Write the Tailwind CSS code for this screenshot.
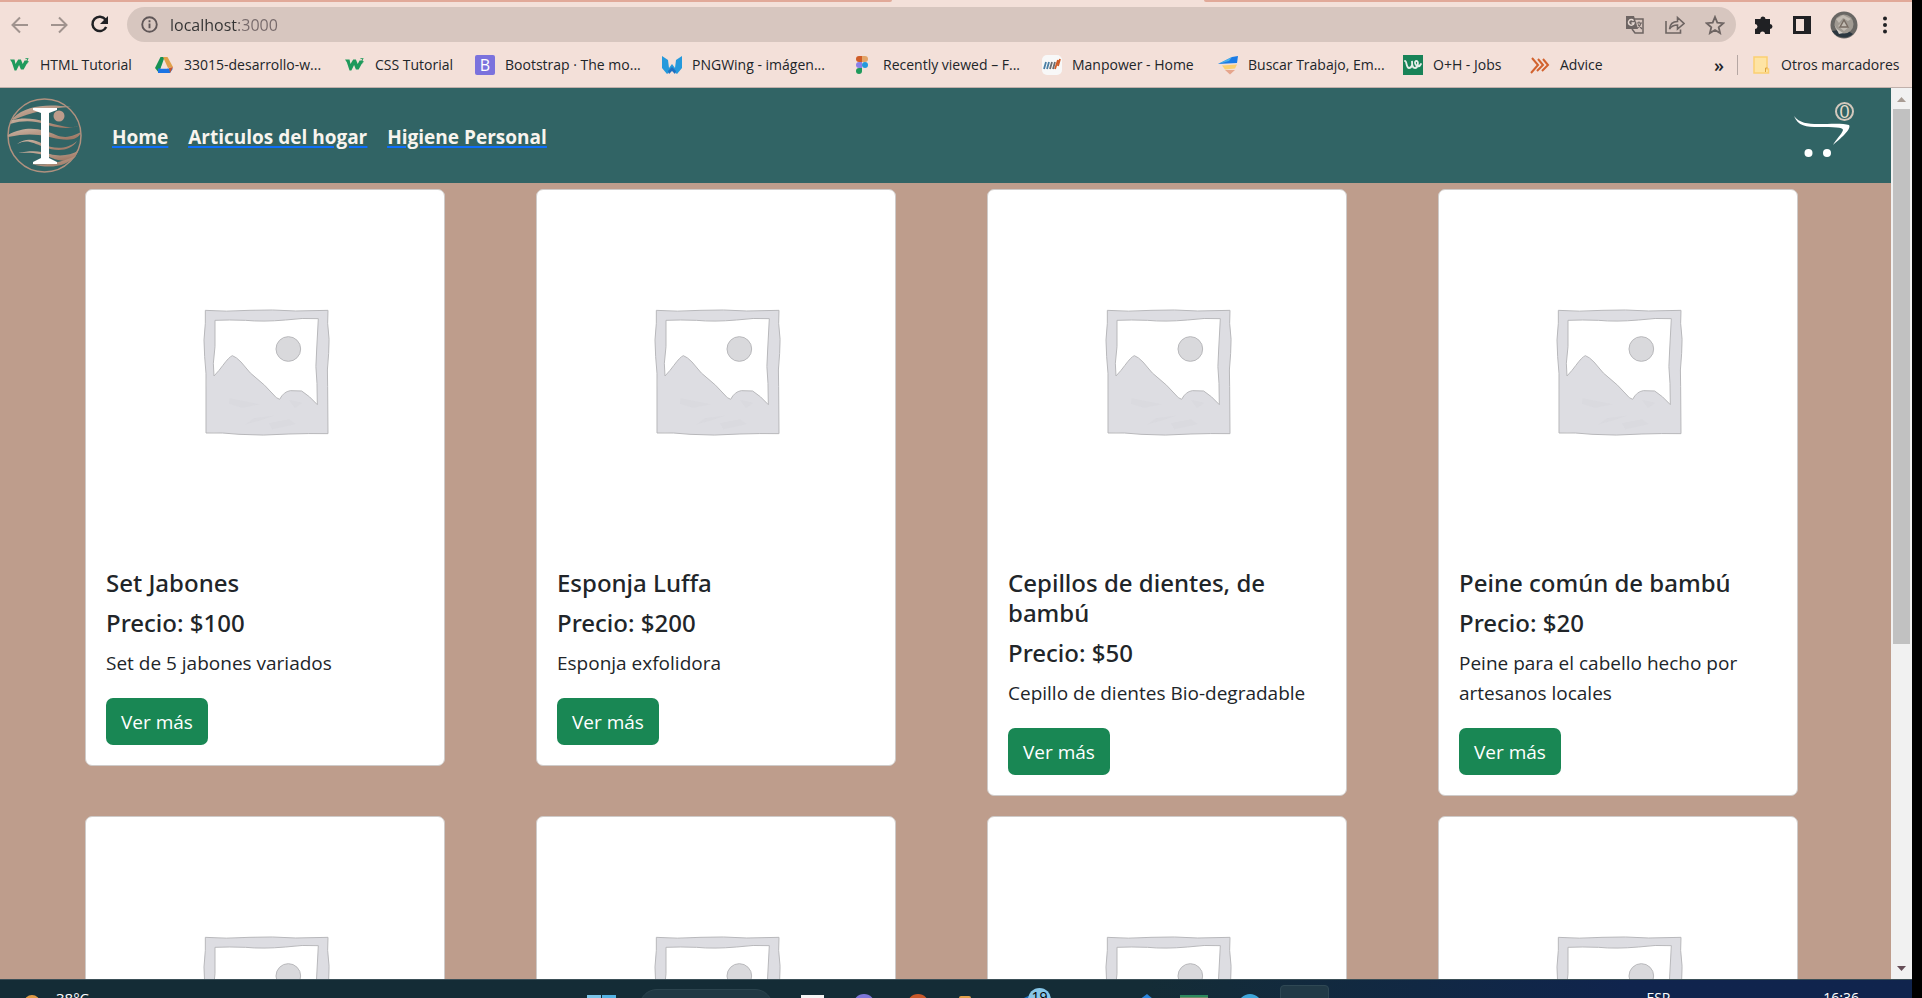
<!DOCTYPE html>
<html lang="es">
<head>
<meta charset="utf-8">
<meta name="viewport" content="width=device-width, initial-scale=1">
<title>Tienda</title>
<script src="https://cdn.jsdelivr.net/npm/@tailwindcss/browser@4"></script>
</head>
<body class="h-screen overflow-hidden bg-black pr-[10px] font-['Open_Sans','Noto_Sans',sans-serif] text-[#212529]">

<!-- Shared drawings -->
<svg class="hidden" aria-hidden="true">
  <symbol id="placeholder" viewBox="0 0 358 358">
    <g transform="translate(103 100) scale(.3333)" stroke="#b8b8bb" stroke-width="3" stroke-linejoin="round">
      <path fill="#dddde2" fill-rule="evenodd" d="M49 61 Q110 66 180 61 Q250 58 320 63 L417 61 L416 100 Q423 150 419 190 Q413 240 416 290 L417 431 Q360 430 300 432 Q220 438 150 433 Q100 427 51 429 L51 300 Q53 250 47 200 Q42 150 49 100 Z M78 91 L78 170 L73 220 L75 258 Q92 240 101 227 Q120 201 130 197 Q142 201 156 216 L184 249 Q230 285 262 323 L272 328 Q284 305 304 302 L338 303 Q362 318 385 344 L384 280 Q378 230 383 180 L388 86 Q340 83 290 90 Q220 96 170 91 Q120 89 78 91 Z"/>
      <circle cx="298" cy="177" r="37" fill="#d9d9dc"/>
      <g fill="#d3d3da" stroke="none" opacity=".35"><path d="M122 325l40 8 50 10-52 10-40-12zM195 385l60-8-40 14-45 12zM240 400l60-12 20 14-70 16zM300 330l40 8-22 16z"/></g>
    </g>
  </symbol>
  <symbol id="w3" viewBox="0 0 22 16">
    <path fill="#1f9a5c" d="M0 2h5l1 5 3-5h3l2 5 2-4h2l2 1-5 9h-3l-2-5-3 6H5L2 5z"/>
    <path fill="none" stroke="#1f9a5c" stroke-width="1" d="M17 1h3l-1.500 2c2 0 2 3-.5 3l-1-.5"/>
  </symbol>
</svg>

<div class="flex h-full flex-col">
  <!-- Browser toolbar -->
  <header class="shrink-0 border-b border-[#c0b0ab] bg-[#f3e0d9]">
    <div class="flex h-[2px] justify-between">
      <span class="w-[892px] rounded-br bg-[#e1a999]"></span>
      <span class="w-[708px] rounded-bl bg-[#e1a999]"></span>
    </div>
    <div class="flex h-[45px] items-center">
      <div class="flex w-[127px] items-center gap-5 pl-[10px]">
        <button class="flex size-5" aria-label="Atrás"><svg viewBox="0 0 20 20" class="size-5" fill="none" stroke="#a0938e" stroke-width="2"><path d="M18 10H3M10 2.500 2.500 10l7.500 7.500"/></svg></button>
        <button class="flex size-5" aria-label="Adelante"><svg viewBox="0 0 20 20" class="size-5" fill="none" stroke="#a0938e" stroke-width="2"><path d="M1 10h15M9 2.500 16.500 10 9 17.500"/></svg></button>
        <button class="flex size-5" aria-label="Recargar"><svg viewBox="0 0 20 20" class="size-5"><path fill="none" stroke="#202124" stroke-width="2.500" d="M15.500 4.600A7.200 7.200 0 1 0 16.200 12"/><path fill="#202124" d="M18 1v8h-8z"/></svg></button>
      </div>
      <form class="flex h-[35px] flex-1 items-center rounded-full bg-[#d7c6bf] pr-[11px] pl-[14px]">
        <svg viewBox="0 0 18 18" class="size-[17px]" fill="none" stroke="#5f5657" stroke-width="2"><circle cx="9" cy="9" r="7.700"/><path d="M9 8v5M9 4.500v2"/></svg>
        <input aria-label="Barra de direcciones" value="localhost:3000" class="ml-3 w-full flex-1 bg-[linear-gradient(90deg,#333_68px,#76696a_68px)] bg-clip-text text-[16px] text-transparent outline-none">
        <div class="flex items-center gap-5">
          <button type="button" aria-label="Traducir"><svg viewBox="0 0 20 20" class="size-5"><path fill="none" stroke="#6d6462" stroke-width="1.500" d="M9 4h9v14h-8l-3-4"/><path fill="#6d6462" d="M1 1h8l4 13H1z"/><path fill="none" stroke="#e5d8d2" stroke-width="1.500" d="M8.500 5.700A2.800 2.800 0 1 0 9 8H6.500"/><path fill="none" stroke="#6d6462" stroke-width="1.200" d="M11.500 8H17M14 6.500V8M16 8c-.5 2.500-2 4-3.500 5M13 9.500l4 4.500"/></svg></button>
          <button type="button" aria-label="Compartir"><svg viewBox="0 0 20 20" class="size-5" fill="none" stroke="#6d6462" stroke-width="1.600"><path d="M1 6v12h14.500v-3.500M4.500 14c.5-5 3-7.500 8-7.500V2.500L19 8.500l-6.500 5.500v-4c-4 0-6 1-8 4z"/></svg></button>
          <button type="button" aria-label="Marcador"><svg viewBox="0 0 20 20" class="size-5" fill="none" stroke="#6d6462" stroke-width="1.800"><path d="m10 2 2.300 5.700 6 .5-4.600 4 1.400 5.900L10 15l-5.100 3.100 1.400-5.900-4.600-4 6-.5z"/></svg></button>
        </div>
      </form>
      <div class="flex items-center gap-[18px] pr-4 pl-[18px]">
        <button aria-label="Extensiones"><svg viewBox="0 0 20 20" class="size-5" fill="#202124"><path d="M1 4h5.500a2.500 2.500 0 0 1 5 0H16v5a2.500 2.500 0 0 1 0 5v5h-5a2.500 2.500 0 0 0-5 0H1v-5a2.500 2.500 0 0 0 0-5z"/></svg></button>
        <button aria-label="Panel lateral"><svg viewBox="0 0 20 20" class="size-5"><path fill="#202124" fill-rule="evenodd" d="M1 1h18v18H1zM4 4v12h8V4z"/></svg></button>
        <button aria-label="Perfil"><svg viewBox="0 0 28 28" class="size-7"><circle cx="14" cy="14" r="13.500" fill="#696764"/><path d="M2 20a14 14 0 0 0 21 3l-8-5z" fill="#2b3740"/><circle cx="14" cy="13" r="9.500" fill="#a09a92"/><path d="M6 8l7-4 8 4-3 2-5-3-4 5zM8 15l6-6 5 7-5 4z" fill="#c2bbb2"/><path d="m14 9-4 7h8z" fill="none" stroke="#776b62" stroke-width="1.500"/><path d="M4 13l3 5 6 4-4 1z" fill="#d0cbc4"/></svg></button>
        <button aria-label="Menú"><svg viewBox="0 0 20 20" class="size-5" fill="#202124"><circle cx="9" cy="3.500" r="2"/><circle cx="9" cy="10" r="2"/><circle cx="9" cy="16.500" r="2"/></svg></button>
      </div>
    </div>

    <nav aria-label="Marcadores" class="flex h-[40px] items-center pb-[5px] pl-[10px] text-[14px] whitespace-nowrap">
      <div class="grid flex-1 grid-cols-[144px_191px_130px_187px_191px_189px_176px_185px_127px_1fr]">
        <a href="#" class="flex items-center gap-[10px]"><svg class="size-5"><use href="#w3"/></svg>HTML Tutorial</a>
        <a href="#" class="flex items-center gap-[10px]"><svg viewBox="0 0 20 20" class="size-5"><path fill="#169154" d="M6.500 2h4L5 18l-4-5z"/><path fill="#e0a04a" d="M9 2h4.500L19 12l-5 1z"/><path fill="#1b74e4" d="m4 13.500h15L16 18H4z"/><path fill="#f3e0d9" d="m10 7.500 3.500 6h-7z"/><path fill="#c9552a" d="m15 13 4-1-3 6z"/></svg>33015-desarrollo-w...</a>
        <a href="#" class="flex items-center gap-[10px]"><svg class="size-5"><use href="#w3"/></svg>CSS Tutorial</a>
        <a href="#" class="flex items-center gap-[10px]"><span class="flex size-5 items-center justify-center rounded-xs bg-[#7a72dd] text-[16px] text-white">B</span>Bootstrap · The mo...</a>
        <a href="#" class="flex items-center gap-[10px]"><svg viewBox="0 0 20 20" class="size-5"><path fill="#2499dc" d="M0 1l6 4 1 8 3-4 3 4 1-8 6-4v12l-5 6-5-4-5 4-5-6z"/><path fill="#1f6fc0" d="m10 12 4 4-1 3-3-3-3 3-1-3z"/></svg>PNGWing - imágen...</a>
        <a href="#" class="flex items-center gap-[10px]"><svg viewBox="0 0 20 20" class="size-5"><path fill="#cf5c28" d="M9 1H6a3 3 0 0 0 0 6h3z"/><path fill="#e3a468" d="M9 1h3a3 3 0 0 1 0 6H9z"/><path fill="#8a7fe6" d="M9 7H6a3 3 0 0 0 0 6h3z"/><circle cx="12" cy="10" r="3" fill="#2499dc"/><path fill="#1f9a5c" d="M9 13H6a3 3 0 1 0 3 3z"/></svg>Recently viewed – F...</a>
        <a href="#" class="flex items-center gap-[10px]"><svg viewBox="0 0 20 20" class="size-5"><rect width="20" height="20" rx="5" fill="#f8f8f8"/><g fill="none" stroke-width="1.800"><path stroke="#4a7fa5" d="M2 14l2-7M5 14l2-7"/><path stroke="#6c6c70" d="M8 14l2-7M11 14l2-7"/><path stroke="#cf5c28" d="M13 14l3-9M16 11l2-7"/></g></svg>Manpower - Home</a>
        <a href="#" class="flex items-center gap-[10px]"><svg viewBox="0 0 20 20" class="size-5"><path fill="#1b7be6" d="M0 9 14 2l6-1-1 7z"/><path fill="#4bb0ea" d="M0 9l14-7-3 4z"/><path fill="#fbd070" d="M4 10.500l15-1-2 4-10 1z"/><path fill="#e6a58c" d="M7 15h10l-5 4.500z"/></svg>Buscar Trabajo, Em...</a>
        <a href="#" class="flex items-center gap-[10px]"><svg viewBox="0 0 20 20" class="size-5"><path fill="#188358" d="M0 0h20v20H0z"/><path fill="none" stroke="#e5eee9" stroke-width="1.800" stroke-linecap="round" d="M2 6c2 0 1 7 4 7s3.500-4 3-7c0 4 0 7 3 7s4-7 1.500-7-1.500 4 .5 5 3 0 4-2"/></svg>O+H - Jobs</a>
        <a href="#" class="flex items-center gap-[10px]"><svg viewBox="0 0 20 20" class="size-5" fill="none" stroke="#d2622e" stroke-width="2"><path d="M2 3l6 7-7 8M8 4l5 6-6 6M13 4l5 6-6 6"/></svg>Advice</a>
      </div>
      <button class="mr-[13px] text-[18px] leading-5 font-semibold" aria-label="Más marcadores">»</button>
      <span class="h-5 w-px bg-[#b5a7a3]"></span>
      <a href="#" class="flex w-[174px] items-center gap-[11px] pl-[14px]"><svg viewBox="0 0 18 20" class="h-5 w-[18px]"><path fill="#fee4a4" stroke="#fccf72" stroke-width="1.500" d="M2 2h13v12h1.500v4H2z"/><path fill="none" stroke="#dba33f" d="M13.500 17v-4h2"/></svg>Otros marcadores</a>
    </nav>
  </header>

  <!-- Page viewport and scrollbar -->
  <div class="flex min-h-0 flex-1">
    <div class="min-w-0 flex-1 overflow-hidden bg-[#be9d8c]">
      <div class="flex h-[95px] items-center bg-[#316465] pr-[37px] pl-[7px]">
        <a href="#" aria-label="Inicio"><svg viewBox="0 0 76 76" class="size-[76px]">
          <defs><linearGradient id="bronze" x1="0" y1="0" x2="1" y2="1"><stop offset="0" stop-color="#cbb5a4"/><stop offset="1" stop-color="#99705c"/></linearGradient></defs>
          <circle cx="37.500" cy="37.500" r="36.500" fill="none" stroke="#b0917f" stroke-width="1.500"/>
          <g fill="url(#bronze)">
            <path d="M6 20C20 7 40 6 64 9 42 10 25 14 6 22z"/>
            <path d="M5 22c20-5 35 3 50 6s12 0 16 0c-12 4-24 1-34-2S17 22 3 26z"/>
            <path d="M1 37c20-11 36-5 48 0s20-1 25-3c-2 7-10 9-22 7S28 33 1 39z"/>
            <path d="M10 46c10-7 18-4 26 0s23 7 34-3c-6 10-20 11-33 6s-17-8-27-3z"/>
            <path d="M11 55c14-3 22-2 32 1s21 1 28-3c-3 10-14 12-26 7s-20-6-34-5z"/>
            <path d="M25 66c14 1 24 0 44-8-8 9-24 14-44 8z"/>
            <circle cx="52" cy="18" r="5.500" fill="#bd9c8b"/>
          </g>
          <path fill="#fff" d="M26 10h24v2l-8 3v45l8 4v2H26v-2l8-4V15l-8-3z"/>
        </svg></a>
        <nav aria-label="Principal" class="ml-[29px] flex gap-5 pt-[2px] text-[19px] leading-[30px] font-bold text-[#f8f4ee] underline decoration-[#0d6efd] decoration-2 underline-offset-2">
          <a href="#">Home</a>
          <a href="#">Articulos del hogar</a>
          <a href="#">Higiene Personal</a>
        </nav>
        <button class="relative mb-[10px] ml-auto h-[57px] w-[60px] text-left" aria-label="Carrito">
          <svg viewBox="0 0 60 57" class="h-[57px] w-[60px]" fill="#fff"><path d="M0 14c5 7 14 8 24 8 12 0 25-1 31 1 3 4-9 14-16 20 3-6 9-11 10-15 0-3-10-3-24-3C12 25 4 24 0 14z"/><circle cx="14.500" cy="51" r="4"/><circle cx="33" cy="51" r="4"/></svg>
          <span class="absolute top-0 right-0 flex size-[19px] items-center justify-center rounded-full border-2 border-[#d3c8bd] font-['Liberation_Sans',sans-serif] text-[18px] leading-none text-[#e7dccb]">0</span>
        </button>
      </div>

      <main class="grid grid-cols-4 items-start gap-y-5 pt-[6px] pr-[2px] pl-[85px]">
        <article class="w-[360px] overflow-hidden rounded-[7px] border border-[#cfcbc9] bg-white">
          <svg class="aspect-square w-full"><use href="#placeholder"/></svg>
          <div class="p-5">
            <h2 class="mb-[10px] font-['Noto_Sans',sans-serif] text-[24px] leading-[30px] font-medium">Set Jabones</h2>
            <h3 class="mb-[10px] font-['Noto_Sans',sans-serif] text-[24px] leading-[30px] font-medium">Precio: $100</h3>
            <p class="mb-5 text-[19px] leading-[30px]">Set de 5 jabones variados</p>
            <button class="h-[47px] rounded-[7px] bg-[#198754] px-[15px] pt-[2px] text-[19px] text-white">Ver más</button>
          </div>
        </article>
        <article class="w-[360px] overflow-hidden rounded-[7px] border border-[#cfcbc9] bg-white">
          <svg class="aspect-square w-full"><use href="#placeholder"/></svg>
          <div class="p-5">
            <h2 class="mb-[10px] font-['Noto_Sans',sans-serif] text-[24px] leading-[30px] font-medium">Esponja Luffa</h2>
            <h3 class="mb-[10px] font-['Noto_Sans',sans-serif] text-[24px] leading-[30px] font-medium">Precio: $200</h3>
            <p class="mb-5 text-[19px] leading-[30px]">Esponja exfolidora</p>
            <button class="h-[47px] rounded-[7px] bg-[#198754] px-[15px] pt-[2px] text-[19px] text-white">Ver más</button>
          </div>
        </article>
        <article class="w-[360px] overflow-hidden rounded-[7px] border border-[#cfcbc9] bg-white">
          <svg class="aspect-square w-full"><use href="#placeholder"/></svg>
          <div class="p-5">
            <h2 class="mb-[10px] font-['Noto_Sans',sans-serif] text-[24px] leading-[30px] font-medium">Cepillos de dientes, de bambú</h2>
            <h3 class="mb-[10px] font-['Noto_Sans',sans-serif] text-[24px] leading-[30px] font-medium">Precio: $50</h3>
            <p class="mb-5 text-[19px] leading-[30px]">Cepillo de dientes Bio-degradable</p>
            <button class="h-[47px] rounded-[7px] bg-[#198754] px-[15px] pt-[2px] text-[19px] text-white">Ver más</button>
          </div>
        </article>
        <article class="w-[360px] overflow-hidden rounded-[7px] border border-[#cfcbc9] bg-white">
          <svg class="aspect-square w-full"><use href="#placeholder"/></svg>
          <div class="p-5">
            <h2 class="mb-[10px] font-['Noto_Sans',sans-serif] text-[24px] leading-[30px] font-medium">Peine común de bambú</h2>
            <h3 class="mb-[10px] font-['Noto_Sans',sans-serif] text-[24px] leading-[30px] font-medium">Precio: $20</h3>
            <p class="mb-5 text-[19px] leading-[30px]">Peine para el cabello hecho por artesanos locales</p>
            <button class="h-[47px] rounded-[7px] bg-[#198754] px-[15px] pt-[2px] text-[19px] text-white">Ver más</button>
          </div>
        </article>
        <article class="w-[360px] overflow-hidden rounded-[7px] border border-[#cfcbc9] bg-white"><svg class="aspect-square w-full"><use href="#placeholder"/></svg></article>
        <article class="w-[360px] overflow-hidden rounded-[7px] border border-[#cfcbc9] bg-white"><svg class="aspect-square w-full"><use href="#placeholder"/></svg></article>
        <article class="w-[360px] overflow-hidden rounded-[7px] border border-[#cfcbc9] bg-white"><svg class="aspect-square w-full"><use href="#placeholder"/></svg></article>
        <article class="w-[360px] overflow-hidden rounded-[7px] border border-[#cfcbc9] bg-white"><svg class="aspect-square w-full"><use href="#placeholder"/></svg></article>
      </main>
    </div>
    <div class="flex w-[21px] shrink-0 flex-col items-center bg-[#f1f1f1]">
      <svg viewBox="0 0 17 21" class="h-[21px] w-[17px] shrink-0"><path fill="#a89c94" d="M4 14h9L8.500 9z"/></svg>
      <div class="h-3/5 w-[17px] bg-[#c1c1c1]"></div>
      <svg viewBox="0 0 17 21" class="mt-auto h-[21px] w-[17px] shrink-0"><path fill="#654d57" d="M4 8h9l-4.500 5z"/></svg>
    </div>
  </div>

  <!-- Taskbar -->
  <footer class="flex h-[19px] shrink-0 items-start overflow-hidden border-t border-[#3b4f57] bg-linear-to-r from-[#142c36] from-60% to-[#10244d] to-85% text-[15px] leading-5 text-white">
    <svg viewBox="0 0 16 16" class="mt-[15px] ml-6 size-4 shrink-0"><circle cx="8" cy="8" r="8" fill="#e09a45"/></svg>
    <span class="mt-2 ml-4 w-[60px] shrink-0">38°C</span>
    <button class="mt-[15px] ml-[471px] grid size-[29px] shrink-0 grid-cols-2 gap-px" aria-label="Inicio de Windows"><span class="h-[14px] bg-[#7cc5e8]"></span><span class="h-[14px] bg-[#55b3e4]"></span></button>
    <button class="mt-[9px] ml-[23px] h-9 w-[134px] shrink-0 rounded-full border border-[#2c444e] bg-[#213944]" aria-label="Buscar"></button>
    <button class="mt-[15px] ml-7 size-[23px] shrink-0 bg-[#f4f4f4]" aria-label="Vista de tareas"></button>
    <button class="mt-[14px] ml-[29px] size-[22px] shrink-0 rounded-full bg-[#7d76d8]" aria-label="Chat"></button>
    <button class="mt-[14px] ml-8 size-[22px] shrink-0 rounded-full bg-[#c9582a]" aria-label="Brave"></button>
    <button class="mt-4 ml-[30px] size-3 shrink-0 rounded-xs bg-[#e0a04a]" aria-label="Archivos"></button>
    <button class="relative ml-[53px] h-8 w-[27px] shrink-0" aria-label="Mensajes"><svg viewBox="0 0 27 32" class="h-8 w-[27px]"><path fill="#1f6fc0" d="M0 18l8-4v16z"/></svg><span class="absolute top-2 right-0 flex h-[17px] w-[23px] items-center justify-center rounded-t-full bg-[#86c6e8] text-[14px] leading-none text-black">19</span></button>
    <button class="ml-[88px] h-8 w-4 shrink-0" aria-label="Visual Studio Code"><svg viewBox="0 0 16 32" class="h-8 w-4"><path fill="#2b86dc" d="M0 20l8-6 6 5v10H0z"/></svg></button>
    <button class="mt-[15px] ml-[25px] size-7 shrink-0 border-t-2 border-[#2c8a5e] bg-[#6f8a68]" aria-label="Hoja de cálculo"></button>
    <button class="mt-[14px] ml-[30px] size-6 shrink-0 rounded-full bg-[#3fa6da]" aria-label="Telegram"></button>
    <button class="mt-[5px] ml-[18px] h-9 w-[49px] shrink-0 rounded border border-[#2f4854] bg-[#223a47]" aria-label="Ventana activa"></button>
    <span class="mt-2 mr-[153px] ml-auto text-[14px]">ESP</span>
    <span class="mt-2 mr-[53px] text-[14px]">16:36</span>
  </footer>
</div>
</body>
</html>
